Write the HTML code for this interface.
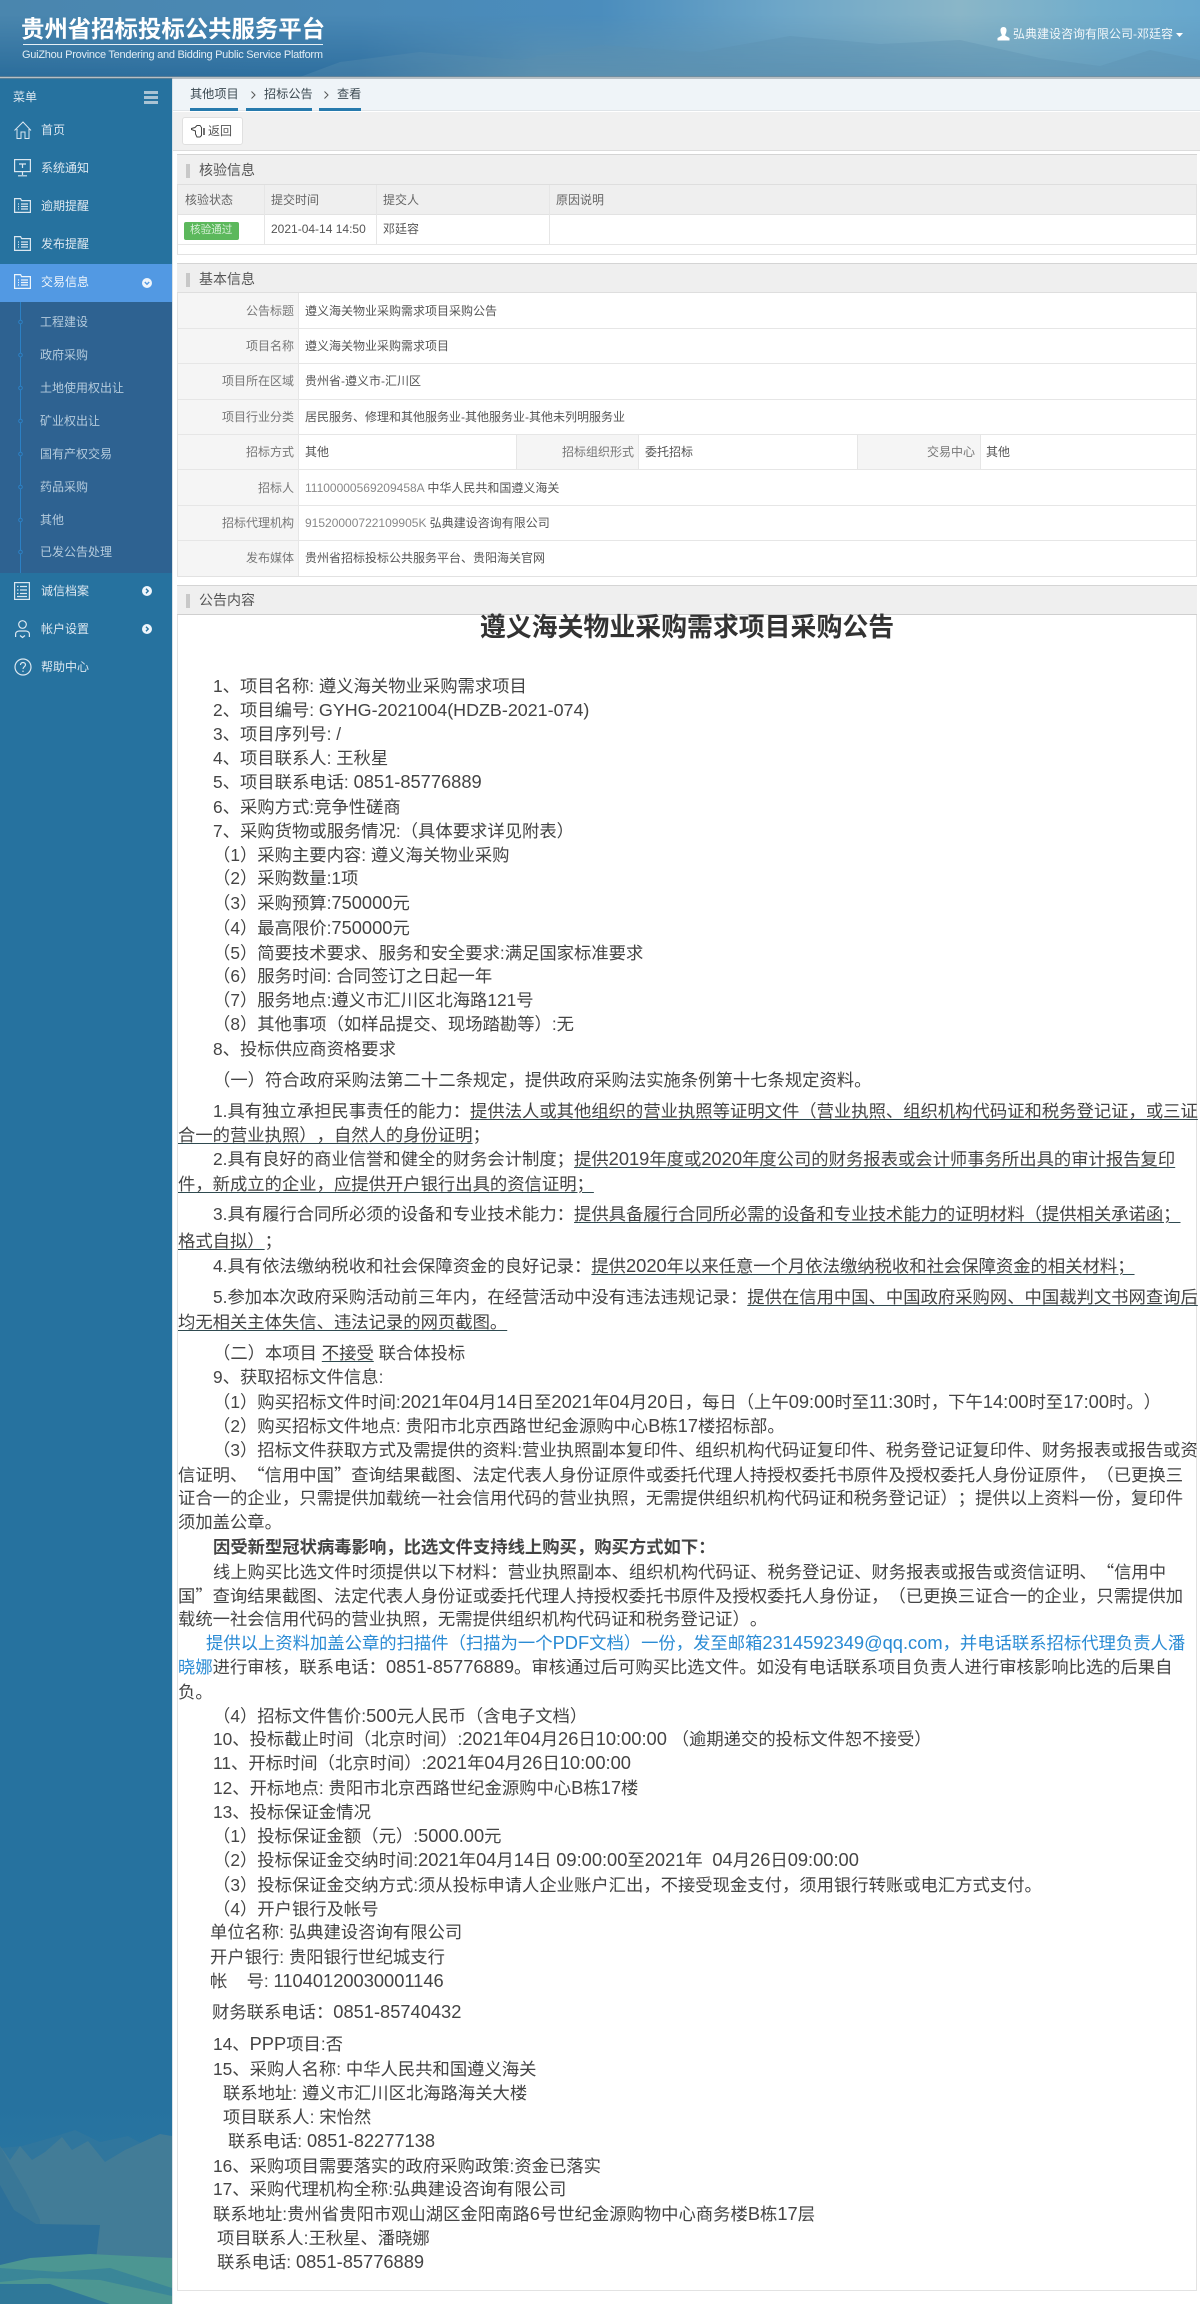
<!DOCTYPE html>
<html lang="zh-CN"><head><meta charset="utf-8"><title>贵州省招标投标公共服务平台</title>
<style>
*{box-sizing:border-box}
html,body{margin:0;padding:0;background:#fff}
body{position:relative;width:1200px;height:2304px;overflow:hidden;font:12px/16px "Liberation Sans","Noto Sans CJK SC",sans-serif;color:#555;text-spacing-trim:space-all;filter:blur(.35px)}
.a{position:absolute}
.t{position:absolute;white-space:nowrap;line-height:16px}
.m{color:#dbe7f0}
.s{color:#b4cbdd}
.bx{position:absolute;background:#fff;border:1px solid #e2e2e2}
.hd{position:absolute;background:#efefef;border-top:1px solid #d4d4d4;border-bottom:1px solid #dedede;left:177px;width:1020px}
.bar{position:absolute;left:186px;width:4px;height:14px;background:#c8c8c8}
.ht{position:absolute;left:199px;font-size:14px;line-height:18px;color:#555;white-space:nowrap}
.l{position:absolute;background:#e6e6e6}
.lb{position:absolute;background:#f5f5f5}
.k{position:absolute;white-space:nowrap;color:#777;text-align:right;line-height:16px}
.v{position:absolute;white-space:nowrap;color:#555;line-height:16px}
p{position:absolute;margin:0;white-space:nowrap;font-size:17.33px;line-height:24px;color:#444;height:24px}
p u{text-decoration:underline;text-decoration-color:#2f4a50;text-underline-offset:2px}
i{font-style:normal;font-size:18.3px}
em{font-style:normal;font-family:"Noto Sans CJK SC",sans-serif}
svg{position:absolute;overflow:visible}
</style></head><body>

<!-- sidebar -->
<div class="a" style="left:0;top:78px;width:172px;height:2226px;background:#26729f"></div>
<svg style="left:0;top:2100px" width="172" height="204" viewBox="0 0 172 204">
<defs><linearGradient id="sb" x1="0" y1="0" x2="0" y2="1"><stop offset="0" stop-color="#26729f"/><stop offset="1" stop-color="#2d7aa5"/></linearGradient></defs>
<rect width="172" height="204" fill="url(#sb)"/>
<path d="M0 48 L22 46 L50 38 L75 30 L100 42 L128 36 L172 60 V204 H0Z" fill="#30769d"/>
<path d="M0 46 L10 60 L20 46 L32 60 L45 52 L62 37 L72 50 L88 41 L105 62 L125 50 L160 34 L172 36 V170 H0Z" fill="#427c97"/>
<path d="M0 46 L12 68 L26 92 L40 120 V165 L0 170Z" fill="#397797"/>
<path d="M0 85 L14 110 L36 124 L100 125 L96 160 L0 170Z" fill="#2d7099"/>
<path d="M0 165 L30 158 L90 154 L172 158 V204 H0Z" fill="#4c9692"/>
<path d="M0 168 L60 172 L110 168 L172 188 V196 L100 180 L40 178 L0 182Z" fill="#36829a" opacity=".8"/>
<path d="M0 184 L50 184 L110 204 H0Z" fill="#2f7899"/>
</svg>
<div class="a" style="left:172px;top:78px;width:1px;height:2226px;background:#d9e2e8"></div>

<!-- header -->
<svg style="left:0;top:0" width="1200" height="77" viewBox="0 0 1200 77">
<defs>
<linearGradient id="h1" x1="0" y1="0" x2="1" y2="0"><stop offset="0" stop-color="#4a86ae"/><stop offset=".3" stop-color="#4a89b6"/><stop offset=".5" stop-color="#4b8dbd"/><stop offset=".65" stop-color="#6da6c8"/><stop offset=".8" stop-color="#8ab6c8"/><stop offset=".92" stop-color="#70adcc"/><stop offset="1" stop-color="#67a7cd"/></linearGradient>
<linearGradient id="h2" x1="0" y1="0" x2="1" y2="0"><stop offset="0" stop-color="#2b6d9b"/><stop offset=".3" stop-color="#2f6f9f"/><stop offset=".45" stop-color="#5b8fae"/><stop offset=".7" stop-color="#5f95b5"/><stop offset=".85" stop-color="#6a9fbb"/><stop offset="1" stop-color="#5f99bd"/></linearGradient>
<linearGradient id="v" x1="0" y1="0" x2="0" y2="1"><stop offset=".2" stop-color="#fff" stop-opacity="0"/><stop offset="1" stop-color="#fff"/></linearGradient>
<mask id="mk"><rect width="1200" height="77" fill="url(#v)"/></mask>
</defs>
<rect width="1200" height="77" fill="url(#h1)"/>
<rect width="1200" height="77" fill="url(#h2)" mask="url(#mk)"/>
<path d="M300 77 L340 62 L420 52 L520 60 L600 45 L700 52 L790 36 L880 44 L960 40 L1040 58 L1100 66 L1150 50 L1200 60 V77Z" fill="#5b90b0" opacity=".35"/>
</svg>
<div class="a" style="left:0;top:76px;width:1200px;height:3px;background:#7c8a94;opacity:.55"></div>
<div class="t" style="left:21px;top:14px;font-size:23.4px;line-height:30px;color:#fff;font-weight:700">贵州省招标投标公共服务平台</div>
<div class="a" style="left:23px;top:44px;width:300px;height:1px;background:#e6f0f6"></div>
<svg style="left:22px;top:47px" width="302" height="14"><text x="0" y="11" font-family="Liberation Sans" font-size="11" fill="#e2edf4" textLength="301">GuiZhou Province Tendering and Bidding Public Service Platform</text></svg>
<svg style="left:997px;top:27px" width="13" height="14" viewBox="0 0 13 14"><path d="M6.5 0C4.3 0 3.3 1.7 3.5 3.8 3.6 5.6 4.4 7 4.7 7.6V8.6L0.5 11V13.5H12.5V11L8.3 8.6V7.6C8.6 7 9.4 5.6 9.5 3.8 9.7 1.7 8.7 0 6.5 0Z" fill="#fff"/></svg>
<div class="t" style="left:1013px;top:26px;color:#f2f7fa">弘典建设咨询有限公司-邓廷容</div>
<svg style="left:1176px;top:33px" width="7" height="4"><path d="M0 0H7L3.5 4Z" fill="#fff"/></svg>

<!-- menu -->
<div class="t m" style="left:13px;top:89px">菜单</div>
<div class="a" style="left:144px;top:91px;width:14px;height:3px;background:#a9c3d4"></div>
<div class="a" style="left:144px;top:96px;width:14px;height:3px;background:#a9c3d4"></div>
<div class="a" style="left:144px;top:101px;width:14px;height:3px;background:#a9c3d4"></div>

<svg style="left:14px;top:121px" width="18" height="18" viewBox="0 0 18 18" fill="none" stroke="#dbe7f0"><path d="M.5 9.5 9 1l8 8.5M3 8v9.5h4V11h4v6.5h4V8"/></svg>
<div class="t m" style="left:41px;top:122px">首页</div>
<svg style="left:14px;top:159px" width="17" height="18" viewBox="0 0 17 18" fill="none" stroke="#dbe7f0" stroke-width="1.2"><rect x=".6" y=".6" width="15.8" height="12"/><path d="M5 5h7M8.500 5v4M8.500 13v3M4 16.800h9"/></svg>
<div class="t m" style="left:41px;top:160px">系统通知</div>
<svg style="left:14px;top:198px" width="17" height="15" viewBox="0 0 17 15" fill="none" stroke="#dbe7f0" stroke-width="1.2"><path d="M.6 14.400V.6h6l1 2h8.800v11.800z"/><path d="M4 6h1M7 6h7M4 8.500h1M7 8.500h7M4 11h1M7 11h7"/></svg>
<div class="t m" style="left:41px;top:198px">逾期提醒</div>
<svg style="left:14px;top:236px" width="17" height="15" viewBox="0 0 17 15" fill="none" stroke="#dbe7f0" stroke-width="1.2"><path d="M.6 14.400V.6h6l1 2h8.800v11.800z"/><path d="M4 6h1M7 6h7M4 8.500h1M7 8.500h7M4 11h1M7 11h7"/></svg>
<div class="t m" style="left:41px;top:236px">发布提醒</div>

<div class="a" style="left:0;top:264px;width:172px;height:38px;background:#5299e3"></div>
<svg style="left:14px;top:274px" width="17" height="15" viewBox="0 0 17 15" fill="none" stroke="#eef5fb" stroke-width="1.2"><path d="M.6 14.400V.6h6l1 2h8.800v11.800z"/><path d="M4 6h1M7 6h7M4 8.500h1M7 8.500h7M4 11h1M7 11h7"/></svg>
<div class="t" style="left:41px;top:274px;color:#eef5fb">交易信息</div>
<svg style="left:142px;top:278px" width="10" height="10" viewBox="0 0 10 10"><circle cx="5" cy="5" r="5" fill="#eef5fb"/><path d="M2.800 4 5 6.200 7.200 4" fill="none" stroke="#5299e3" stroke-width="1.400"/></svg>

<div class="a" style="left:0;top:302px;width:172px;height:271px;background:#2e6291"></div>
<div class="a" style="left:20px;top:302px;width:1px;height:271px;background:#2c80c4"></div>
<svg style="left:18px;top:302px" width="5" height="271" fill="#2e6291" stroke="#2c80c4"><circle cx="2.500" cy="20" r="1.800"/><circle cx="2.500" cy="53" r="1.800"/><circle cx="2.500" cy="86" r="1.800"/><circle cx="2.500" cy="119" r="1.800"/><circle cx="2.500" cy="152" r="1.800"/><circle cx="2.500" cy="185" r="1.800"/><circle cx="2.500" cy="218" r="1.800"/><circle cx="2.500" cy="250" r="1.800"/></svg>
<div class="t s" style="left:40px;top:314px">工程建设</div>
<div class="t s" style="left:40px;top:347px">政府采购</div>
<div class="t s" style="left:40px;top:380px">土地使用权出让</div>
<div class="t s" style="left:40px;top:413px">矿业权出让</div>
<div class="t s" style="left:40px;top:446px">国有产权交易</div>
<div class="t s" style="left:40px;top:479px">药品采购</div>
<div class="t s" style="left:40px;top:512px">其他</div>
<div class="t s" style="left:40px;top:544px">已发公告处理</div>

<svg style="left:14px;top:582px" width="16" height="18" viewBox="0 0 16 18" fill="none" stroke="#dbe7f0" stroke-width="1.200"><rect x=".6" y=".6" width="14.800" height="16.800"/><path d="M3 4.500h1.500M6 4.500h7M3 8h1.500M6 8h7M3 11.500h1.500M6 11.500h7M3 14.500h10"/></svg>
<div class="t m" style="left:41px;top:583px">诚信档案</div>
<svg style="left:142px;top:586px" width="10" height="10" viewBox="0 0 10 10"><circle cx="5" cy="5" r="5" fill="#eef5fb"/><path d="M4 2.800 6.200 5 4 7.200" fill="none" stroke="#26729f" stroke-width="1.400"/></svg>
<svg style="left:15px;top:620px" width="15" height="18" viewBox="0 0 15 18" fill="none" stroke="#dbe7f0" stroke-width="1.200"><circle cx="7.500" cy="4.500" r="3.800"/><path d="M.6 17v-3c0-2 2-3 3.900-3h6c1.900 0 3.900 1 3.900 3v3M5 15.500l2.500 2 2.500-2"/></svg>
<div class="t m" style="left:41px;top:621px">帐户设置</div>
<svg style="left:142px;top:624px" width="10" height="10" viewBox="0 0 10 10"><circle cx="5" cy="5" r="5" fill="#eef5fb"/><path d="M4 2.800 6.200 5 4 7.200" fill="none" stroke="#26729f" stroke-width="1.400"/></svg>
<svg style="left:14px;top:658px" width="18" height="18" viewBox="0 0 18 18" fill="none" stroke="#dbe7f0" stroke-width="1.200"><circle cx="9" cy="9" r="8"/><path d="M6.500 7c0-1.500 1-2.500 2.500-2.500s2.500 1 2.500 2.300c0 2-2.500 2-2.500 4.200M9 12.600v1.400"/></svg>
<div class="t m" style="left:41px;top:659px">帮助中心</div>

<!-- breadcrumb -->
<div class="a" style="left:173px;top:79px;width:1027px;height:32px;background:#eff4f8;border-bottom:1px solid #dfe4e8"></div>
<div class="t" style="left:190px;top:86px;color:#3c4a52;font-size:12.2px">其他项目</div>
<div class="t" style="left:264px;top:86px;color:#3c4a52;font-size:12.2px">招标公告</div>
<div class="t" style="left:337px;top:86px;color:#3c4a52;font-size:12.2px">查看</div>
<div class="a" style="left:190px;top:108px;width:48px;height:3px;background:#267aad"></div>
<div class="a" style="left:246px;top:108px;width:66px;height:3px;background:#267aad"></div>
<div class="a" style="left:319px;top:108px;width:42px;height:3px;background:#267aad"></div>
<svg style="left:251px;top:91px" width="5" height="8" fill="none" stroke="#555"><path d="M.5.5 4 4 .5 7.500"/></svg>
<svg style="left:324px;top:91px" width="5" height="8" fill="none" stroke="#555"><path d="M.5.5 4 4 .5 7.500"/></svg>

<!-- toolbar -->
<div class="a" style="left:173px;top:112px;width:1027px;height:39px;background:#f0f0f0;border-bottom:1px solid #dcdcdc"></div>
<div class="a" style="left:182px;top:117px;width:61px;height:28px;background:#fff;border:1px solid #e0e0e0;border-radius:3px"></div>
<svg style="left:191px;top:125px" width="15" height="13" viewBox="0 0 15 13" fill="none" stroke="#444"><path d="M.5 3.500 4 2.500 6 .5h3l1.500 2v8L9 12H6L4.500 9V6L.5 4.500z"/><path d="M13 3v7" stroke-width="1.500"/></svg>
<div class="t" style="left:208px;top:123px;color:#555">返回</div>

<!-- panel 1 -->
<div class="bx" style="left:177px;top:154px;width:1020px;height:101px"></div>
<div class="hd" style="top:154px;height:31px"></div>
<div class="bar" style="top:164px"></div>
<div class="ht" style="top:161px">核验信息</div>
<div class="a" style="left:178px;top:185px;width:1018px;height:30px;background:#efefef;border-bottom:1px solid #e2e2e2"></div>
<div class="l" style="left:178px;top:244px;width:1018px;height:1px"></div>
<div class="l" style="left:264px;top:185px;width:1px;height:59px"></div>
<div class="l" style="left:376px;top:185px;width:1px;height:59px"></div>
<div class="l" style="left:549px;top:185px;width:1px;height:59px"></div>
<div class="v" style="left:185px;top:192px;color:#666">核验状态</div>
<div class="v" style="left:271px;top:192px;color:#666">提交时间</div>
<div class="v" style="left:383px;top:192px;color:#666">提交人</div>
<div class="v" style="left:556px;top:192px;color:#666">原因说明</div>
<div class="a" style="left:184px;top:222px;width:55px;height:18px;background:#5cb85c;border-radius:2px"></div>
<div class="t" style="left:190px;top:222px;font-size:10.6px;color:#d8f0d8">核验通过</div>
<div class="v" style="left:271px;top:221px">2021-04-14 14:50</div>
<div class="v" style="left:383px;top:221px">邓廷容</div>

<!-- panel 2 -->
<div class="bx" style="left:177px;top:263px;width:1020px;height:314px"></div>
<div class="hd" style="top:263px;height:30px"></div>
<div class="bar" style="top:273px"></div>
<div class="ht" style="top:270px">基本信息</div>
<div class="lb" style="left:178px;top:293px;width:120px;height:283px"></div>
<div class="lb" style="left:517px;top:434px;width:121px;height:35px"></div>
<div class="lb" style="left:857px;top:434px;width:123px;height:35px"></div>
<div class="l" style="left:298px;top:293px;width:1px;height:283px"></div>
<div class="l" style="left:516px;top:434px;width:1px;height:35px"></div>
<div class="l" style="left:638px;top:434px;width:1px;height:35px"></div>
<div class="l" style="left:857px;top:434px;width:1px;height:35px"></div>
<div class="l" style="left:980px;top:434px;width:1px;height:35px"></div>
<div class="l" style="left:178px;top:328px;width:1018px;height:1px"></div>
<div class="l" style="left:178px;top:363px;width:1018px;height:1px"></div>
<div class="l" style="left:178px;top:399px;width:1018px;height:1px"></div>
<div class="l" style="left:178px;top:434px;width:1018px;height:1px"></div>
<div class="l" style="left:178px;top:469px;width:1018px;height:1px"></div>
<div class="l" style="left:178px;top:505px;width:1018px;height:1px"></div>
<div class="l" style="left:178px;top:540px;width:1018px;height:1px"></div>

<div class="k" style="right:906px;top:303px">公告标题</div><div class="v" style="left:305px;top:303px">遵义海关物业采购需求项目采购公告</div>
<div class="k" style="right:906px;top:338px">项目名称</div><div class="v" style="left:305px;top:338px">遵义海关物业采购需求项目</div>
<div class="k" style="right:906px;top:373px">项目所在区域</div><div class="v" style="left:305px;top:373px">贵州省-遵义市-汇川区</div>
<div class="k" style="right:906px;top:409px">项目行业分类</div><div class="v" style="left:305px;top:409px">居民服务、修理和其他服务业-其他服务业-其他未列明服务业</div>
<div class="k" style="right:906px;top:444px">招标方式</div><div class="v" style="left:305px;top:444px">其他</div>
<div class="k" style="right:566px;top:444px">招标组织形式</div><div class="v" style="left:645px;top:444px">委托招标</div>
<div class="k" style="right:225px;top:444px">交易中心</div><div class="v" style="left:986px;top:444px">其他</div>
<div class="k" style="right:906px;top:480px">招标人</div><div class="v" style="left:305px;top:480px"><span style="color:#888">11100000569209458A</span> 中华人民共和国遵义海关</div>
<div class="k" style="right:906px;top:515px">招标代理机构</div><div class="v" style="left:305px;top:515px"><span style="color:#888">91520000722109905K</span> 弘典建设咨询有限公司</div>
<div class="k" style="right:906px;top:550px">发布媒体</div><div class="v" style="left:305px;top:550px">贵州省招标投标公共服务平台、贵阳海关官网</div>

<!-- panel 3 -->
<div class="bx" style="left:177px;top:585px;width:1020px;height:1706px"></div>
<div class="hd" style="top:585px;height:30px;border-bottom:1px solid #cfcfcf"></div>
<div class="bar" style="top:594px"></div>
<div class="ht" style="top:591px">公告内容</div>

<div class="a" style="left:177px;top:612px;width:1020px;text-align:center;font-size:25.9px;line-height:32px;font-weight:700;color:#333;white-space:nowrap">遵义海关物业采购需求项目采购公告</div>

<p style="left:213px;top:674px">1、项目名称: 遵义海关物业采购需求项目</p>
<p style="left:213px;top:698px">2、项目编号: <i style="font-size:17.9px">GYHG-2021004(HDZB-2021-074)</i></p>
<p style="left:213px;top:722px">3、项目序列号: /</p>
<p style="left:213px;top:746px">4、项目联系人: 王秋星</p>
<p style="left:213px;top:770px">5、项目联系电话: <i>0851-85776889</i></p>
<p style="left:213px;top:795px">6、采购方式:竞争性磋商</p>
<p style="left:213px;top:819px">7、采购货物或服务情况:（具体要求详见附表）</p>
<p style="left:213px;top:843px">（1）采购主要内容: 遵义海关物业采购</p>
<p style="left:213px;top:866px">（2）采购数量:1项</p>
<p style="left:213px;top:891px">（3）采购预算:<i>750000</i>元</p>
<p style="left:213px;top:916px">（4）最高限价:<i>750000</i>元</p>
<p style="left:213px;top:941px">（5）简要技术要求、服务和安全要求:满足国家标准要求</p>
<p style="left:213px;top:964px">（6）服务时间: 合同签订之日起一年</p>
<p style="left:213px;top:988px">（7）服务地点:遵义市汇川区北海路121号</p>
<p style="left:213px;top:1012px">（8）其他事项（如样品提交、现场踏勘等）:无</p>
<p style="left:213px;top:1037px">8、投标供应商资格要求</p>
<p style="left:213px;top:1068px">（一）符合政府采购法第二十二条规定，提供政府采购法实施条例第十七条规定资料。</p>
<p style="left:213px;top:1099px">1.具有独立承担民事责任的能力：<u>提供法人或其他组织的营业执照等证明文件（营业执照、组织机构代码证和税务登记证，或三证</u></p>
<p style="left:178px;top:1123px"><u>合一的营业执照），自然人的身份证明</u>；</p>
<p style="left:213px;top:1147px">2.具有良好的商业信誉和健全的财务会计制度；<u>提供<i>2019</i>年度或<i>2020</i>年度公司的财务报表或会计师事务所出具的审计报告复印</u></p>
<p style="left:178px;top:1172px"><u>件，新成立的企业，应提供开户银行出具的资信证明；</u></p>
<p style="left:213px;top:1202px">3.具有履行合同所必须的设备和专业技术能力：<u>提供具备履行合同所必需的设备和专业技术能力的证明材料（提供相关承诺函；</u></p>
<p style="left:178px;top:1229px"><u>格式自拟）</u>；</p>
<p style="left:213px;top:1254px">4.具有依法缴纳税收和社会保障资金的良好记录：<u>提供<i>2020</i>年以来任意一个月依法缴纳税收和社会保障资金的相关材料；</u></p>
<p style="left:213px;top:1285px">5.参加本次政府采购活动前三年内，在经营活动中没有违法违规记录：<u>提供在信用中国、中国政府采购网、中国裁判文书网查询后</u></p>
<p style="left:178px;top:1310px"><u>均无相关主体失信、违法记录的网页截图。</u></p>
<p style="left:213px;top:1341px">（二）本项目 <u>不接受</u> 联合体投标</p>
<p style="left:213px;top:1365px">9、获取招标文件信息:</p>
<p style="left:213px;top:1390px">（1）购买招标文件时间:<i>2021</i>年<i>04</i>月<i>14</i>日至<i>2021</i>年<i>04</i>月<i>20</i>日，每日（上午<i>09:00</i>时至<i>11:30</i>时，下午<i>14:00</i>时至<i>17:00</i>时。）</p>
<p style="left:213px;top:1414px">（2）购买招标文件地点: 贵阳市北京西路世纪金源购中心<i>B</i>栋<i>17</i>楼招标部。</p>
<p style="left:213px;top:1438px">（3）招标文件获取方式及需提供的资料:营业执照副本复印件、组织机构代码证复印件、税务登记证复印件、财务报表或报告或资</p>
<p style="left:178px;top:1462px">信证明、<em>“</em>信用中国<em>”</em>查询结果截图、法定代表人身份证原件或委托代理人持授权委托书原件及授权委托人身份证原件，（已更换三</p>
<p style="left:178px;top:1486px">证合一的企业，只需提供加载统一社会信用代码的营业执照，无需提供组织机构代码证和税务登记证）；提供以上资料一份，复印件</p>
<p style="left:178px;top:1510px">须加盖公章。</p>
<p style="left:213px;top:1535px;font-weight:700">因受新型冠状病毒影响，比选文件支持线上购买，购买方式如下：</p>
<p style="left:213px;top:1559px">线上购买比选文件时须提供以下材料：营业执照副本、组织机构代码证、税务登记证、财务报表或报告或资信证明、<em>“</em>信用中</p>
<p style="left:178px;top:1583px">国<em>”</em>查询结果截图、法定代表人身份证或委托代理人持授权委托书原件及授权委托人身份证，（已更换三证合一的企业，只需提供加</p>
<p style="left:178px;top:1607px">载统一社会信用代码的营业执照，无需提供组织机构代码证和税务登记证）。</p>
<p style="left:206px;top:1631px;color:#2a8bd4">提供以上资料加盖公章的扫描件（扫描为一个<i>PDF</i>文档）一份，发至邮箱<i>2314592349@qq.com</i>，并电话联系招标代理负责人潘</p>
<p style="left:178px;top:1655px"><span style="color:#2a8bd4">晓娜</span>进行审核，联系电话：<i>0851-85776889</i>。审核通过后可购买比选文件。如没有电话联系项目负责人进行审核影响比选的后果自</p>
<p style="left:178px;top:1680px">负。</p>
<p style="left:213px;top:1704px">（4）招标文件售价:<i>500</i>元人民币（含电子文档）</p>
<p style="left:213px;top:1727px">10、投标截止时间（北京时间）:<i>2021</i>年<i>04</i>月<i>26</i>日<i>10:00:00</i> （逾期递交的投标文件恕不接受）</p>
<p style="left:213px;top:1751px">11、开标时间（北京时间）:<i>2021</i>年<i>04</i>月<i>26</i>日<i>10:00:00</i></p>
<p style="left:213px;top:1776px">12、开标地点: 贵阳市北京西路世纪金源购中心<i>B</i>栋<i>17</i>楼</p>
<p style="left:213px;top:1800px">13、投标保证金情况</p>
<p style="left:213px;top:1824px">（1）投标保证金额（元）:<i>5000.00</i>元</p>
<p style="left:213px;top:1848px">（2）投标保证金交纳时间:<i>2021</i>年<i>04</i>月<i>14</i>日 <i>09:00:00</i>至<i>2021</i>年&nbsp; <i>04</i>月<i>26</i>日<i>09:00:00</i></p>
<p style="left:213px;top:1873px">（3）投标保证金交纳方式:须从投标申请人企业账户汇出，不接受现金支付，须用银行转账或电汇方式支付。</p>
<p style="left:213px;top:1897px">（4）开户银行及帐号</p>
<p style="left:210px;top:1920px">单位名称: 弘典建设咨询有限公司</p>
<p style="left:210px;top:1945px">开户银行: 贵阳银行世纪城支行</p>
<p style="left:210px;top:1969px">帐&nbsp;&nbsp;&nbsp; 号: <i>11040120030001146</i></p>
<p style="left:212px;top:2000px">财务联系电话：<i>0851-85740432</i></p>
<p style="left:213px;top:2032px">14、<i>PPP</i>项目:否</p>
<p style="left:213px;top:2057px">15、采购人名称: 中华人民共和国遵义海关</p>
<p style="left:223px;top:2081px">联系地址: 遵义市汇川区北海路海关大楼</p>
<p style="left:223px;top:2105px">项目联系人: 宋怡然</p>
<p style="left:228px;top:2129px">联系电话: <i>0851-82277138</i></p>
<p style="left:213px;top:2154px">16、采购项目需要落实的政府采购政策:资金已落实</p>
<p style="left:213px;top:2177px">17、采购代理机构全称:弘典建设咨询有限公司</p>
<p style="left:213px;top:2202px">联系地址:贵州省贵阳市观山湖区金阳南路<i>6</i>号世纪金源购物中心商务楼<i>B</i>栋<i>17</i>层</p>
<p style="left:217px;top:2226px">项目联系人:王秋星、潘晓娜</p>
<p style="left:217px;top:2250px">联系电话: <i>0851-85776889</i></p>

</body></html>
